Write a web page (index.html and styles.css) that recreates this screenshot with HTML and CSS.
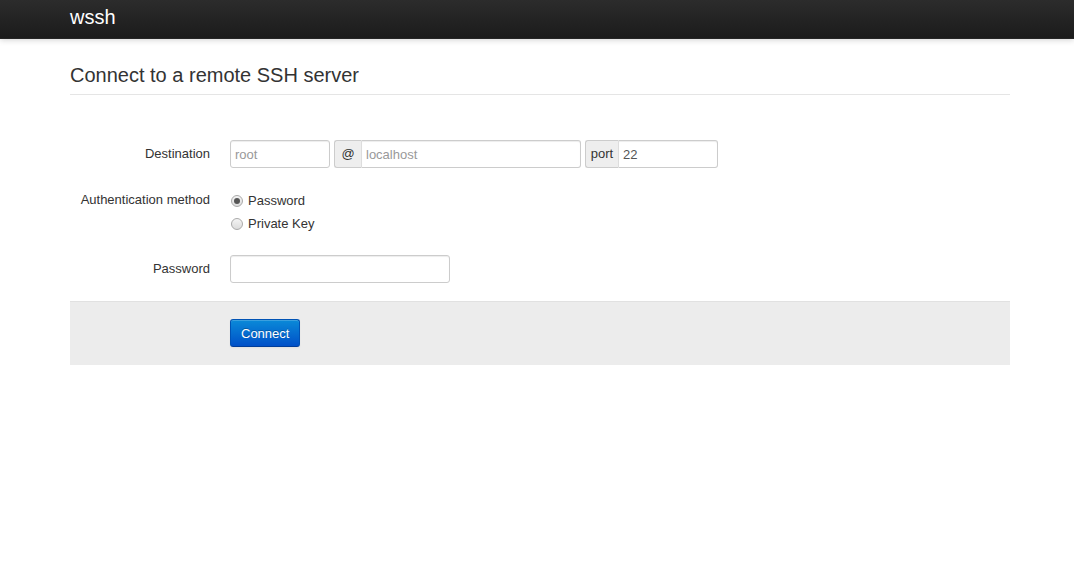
FILE: index.html
```html
<!DOCTYPE html>
<html>
<head>
<meta charset="utf-8">
<title>wssh</title>
<link rel="stylesheet" href="styles.css">
</head>
<body>
<div class="navbar">
  <div class="container">
    <a class="brand" href="#">wssh</a>
  </div>
</div>
<div class="container main">
  <form class="form-horizontal">
    <div class="legend">Connect to a remote SSH server</div>
    <div class="control-group g-dest">
      <label class="control-label">Destination</label>
      <div class="controls">
        <input class="input input-user" type="text" placeholder="root">
        <span class="input-prepend"><span class="add-on add-at">@</span><input class="input input-host" type="text" placeholder="localhost"></span>
        <span class="input-prepend"><span class="add-on add-port">port</span><input class="input input-port" type="text" value="22"></span>
      </div>
    </div>
    <div class="control-group g-auth">
      <label class="control-label">Authentication method</label>
      <div class="controls">
        <label class="radio"><span class="radio-dot checked"></span>Password</label>
        <label class="radio"><span class="radio-dot"></span>Private Key</label>
      </div>
    </div>
    <div class="control-group g-pass">
      <label class="control-label">Password</label>
      <div class="controls">
        <input class="input input-pass" type="password">
      </div>
    </div>
    <div class="form-actions">
      <button class="btn-primary" type="button">Connect</button>
    </div>
  </form>
</div>
</body>
</html>
```

FILE: styles.css
```css
html, body {
  margin: 0;
  padding: 0;
}
body {
  font-family: "Liberation Sans", Arial, sans-serif;
  font-size: 13px;
  line-height: 20px;
  color: #333;
  background: #fff;
}
.container {
  width: 940px;
  margin-left: 70px;
}
.navbar {
  height: 38px;
  background: linear-gradient(to bottom, #2c2c2c, #1b1b1b);
  border-bottom: 1px solid #252525;
  box-shadow: 0 1px 6px rgba(0,0,0,0.18);
}
.brand {
  display: inline-block;
  color: #fff;
  text-decoration: none;
  font-size: 20px;
  line-height: 20px;
  padding-top: 7px;
}
.main {
  padding-top: 17px;
}
.legend {
  font-size: 20px;
  line-height: 37px;
  padding-top: 1px;
  color: #333;
  border-bottom: 1px solid #e5e5e5;
  margin-bottom: 45px;
}
.control-group {
  display: flex;
}
.control-label {
  width: 140px;
  flex: none;
  text-align: right;
  padding-top: 4px;
}
.controls {
  margin-left: 20px;
  display: flex;
  flex-direction: column;
}
.g-dest {
  margin-bottom: 20px;
}
.g-dest .controls {
  flex-direction: row;
  gap: 4px;
}
.g-auth {
  margin-bottom: 20px;
}
.g-auth .control-label {
  padding-top: 2px;
}
.g-auth .controls {
  padding-top: 1px;
}
.g-pass {
  margin-bottom: 18px;
}
.input {
  box-sizing: border-box;
  height: 28px;
  border: 1px solid #ccc;
  border-radius: 3px;
  padding: 4px 4px;
  font-family: "Liberation Sans", Arial, sans-serif;
  font-size: 13px;
  color: #555;
  box-shadow: inset 0 1px 1px rgba(0,0,0,0.075);
  outline: none;
  margin: 0;
}
.input::placeholder {
  color: #999;
}
.input-user { width: 100px; }
.input-host { width: 220px; }
.input-port { width: 100px; }
.input-pass { width: 220px; }
.input-prepend {
  display: inline-flex;
}
.input-prepend .input {
  border-top-left-radius: 0;
  border-bottom-left-radius: 0;
}
.add-on {
  box-sizing: border-box;
  height: 28px;
  padding: 3px 0;
  text-align: center;
  background: #eee;
  border: 1px solid #ccc;
  border-right: 0;
  border-radius: 3px 0 0 3px;
  color: #333;
  font-size: 13px;
  line-height: 20px;
}
.add-at { width: 27px; }
.add-port { width: 33px; }
.add-on + .input {
  border-left: 1px solid #ddd;
}
.radio {
  display: flex;
  align-items: center;
  height: 23px;
}
.radio-dot {
  box-sizing: border-box;
  width: 12px;
  height: 12px;
  border-radius: 50%;
  border: 1px solid #aaa;
  background: linear-gradient(to bottom, #f4f4f4, #dcdcdc);
  margin-left: 1px;
  margin-right: 5px;
  position: relative;
}
.radio-dot.checked::after {
  content: "";
  position: absolute;
  left: 2px;
  top: 2px;
  width: 6px;
  height: 6px;
  border-radius: 50%;
  background: #555;
}
.form-actions {
  background: #ececec;
  border-top: 1px solid #e1e1e1;
  padding: 17px 0 18px 160px;
}
.btn-primary {
  box-sizing: border-box;
  height: 28px;
  padding: 0 10px;
  font-family: "Liberation Sans", Arial, sans-serif;
  font-size: 13px;
  color: #fff;
  text-shadow: 0 -1px 0 rgba(0,0,0,0.25);
  background: linear-gradient(to bottom, #0a8ad8, #0050c8);
  border: 1px solid #0052b4;
  border-bottom-color: #003d99;
  border-radius: 3px;
  box-shadow: inset 0 1px 0 rgba(255,255,255,0.2), 0 1px 2px rgba(0,0,0,0.05);
  cursor: pointer;
}
```
